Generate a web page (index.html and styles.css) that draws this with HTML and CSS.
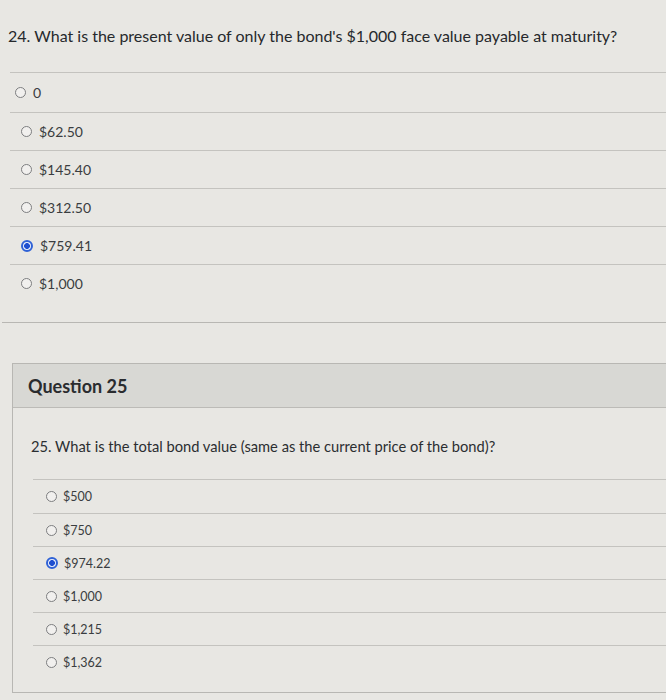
FILE: index.html
```html
<!DOCTYPE html>
<html>
<head>
<meta charset="utf-8">
<link rel="stylesheet" href="styles.css">
</head>
<body>
<div class="page">
  <section class="card card-24">
    <p class="qtext q24">24. What is the present value of only the bond's $1,000 face value payable at maturity?</p>
    <ul class="answers a24">
      <li><span class="radio"></span>0</li>
      <li><span class="radio"></span>$62.50</li>
      <li><span class="radio"></span>$145.40</li>
      <li><span class="radio"></span>$312.50</li>
      <li><span class="radio checked"></span>$759.41</li>
      <li><span class="radio"></span>$1,000</li>
    </ul>
  </section>

  <section class="card card-25">
    <header class="qhead">Question 25</header>
    <div class="qbody">
      <p class="qtext q25">25. What is the total bond value (same as the current price of the bond)?</p>
      <ul class="answers a25">
        <li><span class="radio"></span>$500</li>
        <li><span class="radio"></span>$750</li>
        <li><span class="radio checked"></span>$974.22</li>
        <li><span class="radio"></span>$1,000</li>
        <li><span class="radio"></span>$1,215</li>
        <li><span class="radio"></span>$1,362</li>
      </ul>
    </div>
  </section>
</div>
</body>
</html>
```

FILE: styles.css
```css
* { box-sizing: border-box; }
html, body {
  margin: 0;
  padding: 0;
  background: #e8e7e3;
}
body {
  font-family: Lato, "Open Sans", "Liberation Sans", sans-serif;
  color: #2d3033;
  width: 666px;
  height: 700px;
  overflow: hidden;
}
.page {
  display: flex;
  flex-direction: column;
}
.card {
  border-color: #b8b7b3;
  border-style: solid;
}
.card-24 {
  margin-left: 2px;
  border-width: 0 0 1px 0;
  padding: 25px 0 20px 6px;
  height: 323px;
}
.qtext {
  margin: 0;
}
.q24 {
  font-size: 16px;
  line-height: 22px;
  color: #26292c;
}
.answers {
  list-style: none;
  margin: 0;
  padding: 0;
}
.answers li {
  display: flex;
  align-items: center;
  border-top: 1px solid #c4c3bf;
  color: #3a3d40;
}
.a24 {
  margin-top: 25px;
  margin-left: 2px;
}
.a24 li {
  height: 38px;
  font-size: 14px;
  padding-left: 11px;
  gap: 7px;
}
.a24 li:first-child {
  height: 40px;
  padding-left: 5px;
}
.radio {
  width: 11px;
  height: 11px;
  border-radius: 50%;
  border: 1px solid #7d7e80;
  background: #f1f0ee;
  flex: none;
}
.radio.checked {
  width: 12px;
  height: 12px;
  border: 2px solid #2f62d6;
  background: radial-gradient(circle, #1e4fd0 0 2.6px, #e9eefb 3.2px);
}
.card-25 {
  margin-top: 40px;
  margin-left: 12px;
  border-width: 1px 0 1px 1px;
  height: 330px;
  display: flex;
  flex-direction: column;
}
.qhead {
  height: 44px;
  background: #d8d8d4;
  border-bottom: 1px solid #bcbbb7;
  font-size: 18px;
  font-weight: 700;
  color: #2a2c2f;
  display: flex;
  align-items: center;
  padding-left: 15px;
  padding-top: 1px;
}
.qbody {
  padding: 28px 0 0 18px;
}
.q25 {
  font-size: 14.7px;
  line-height: 20px;
  color: #2b2e31;
}
.a25 {
  margin-top: 23px;
  margin-left: 2px;
}
.a25 li {
  height: 33px;
  font-size: 12.5px;
  padding-left: 13px;
  gap: 6px;
}
.a25 li:first-child {
  height: 34px;
}
```
